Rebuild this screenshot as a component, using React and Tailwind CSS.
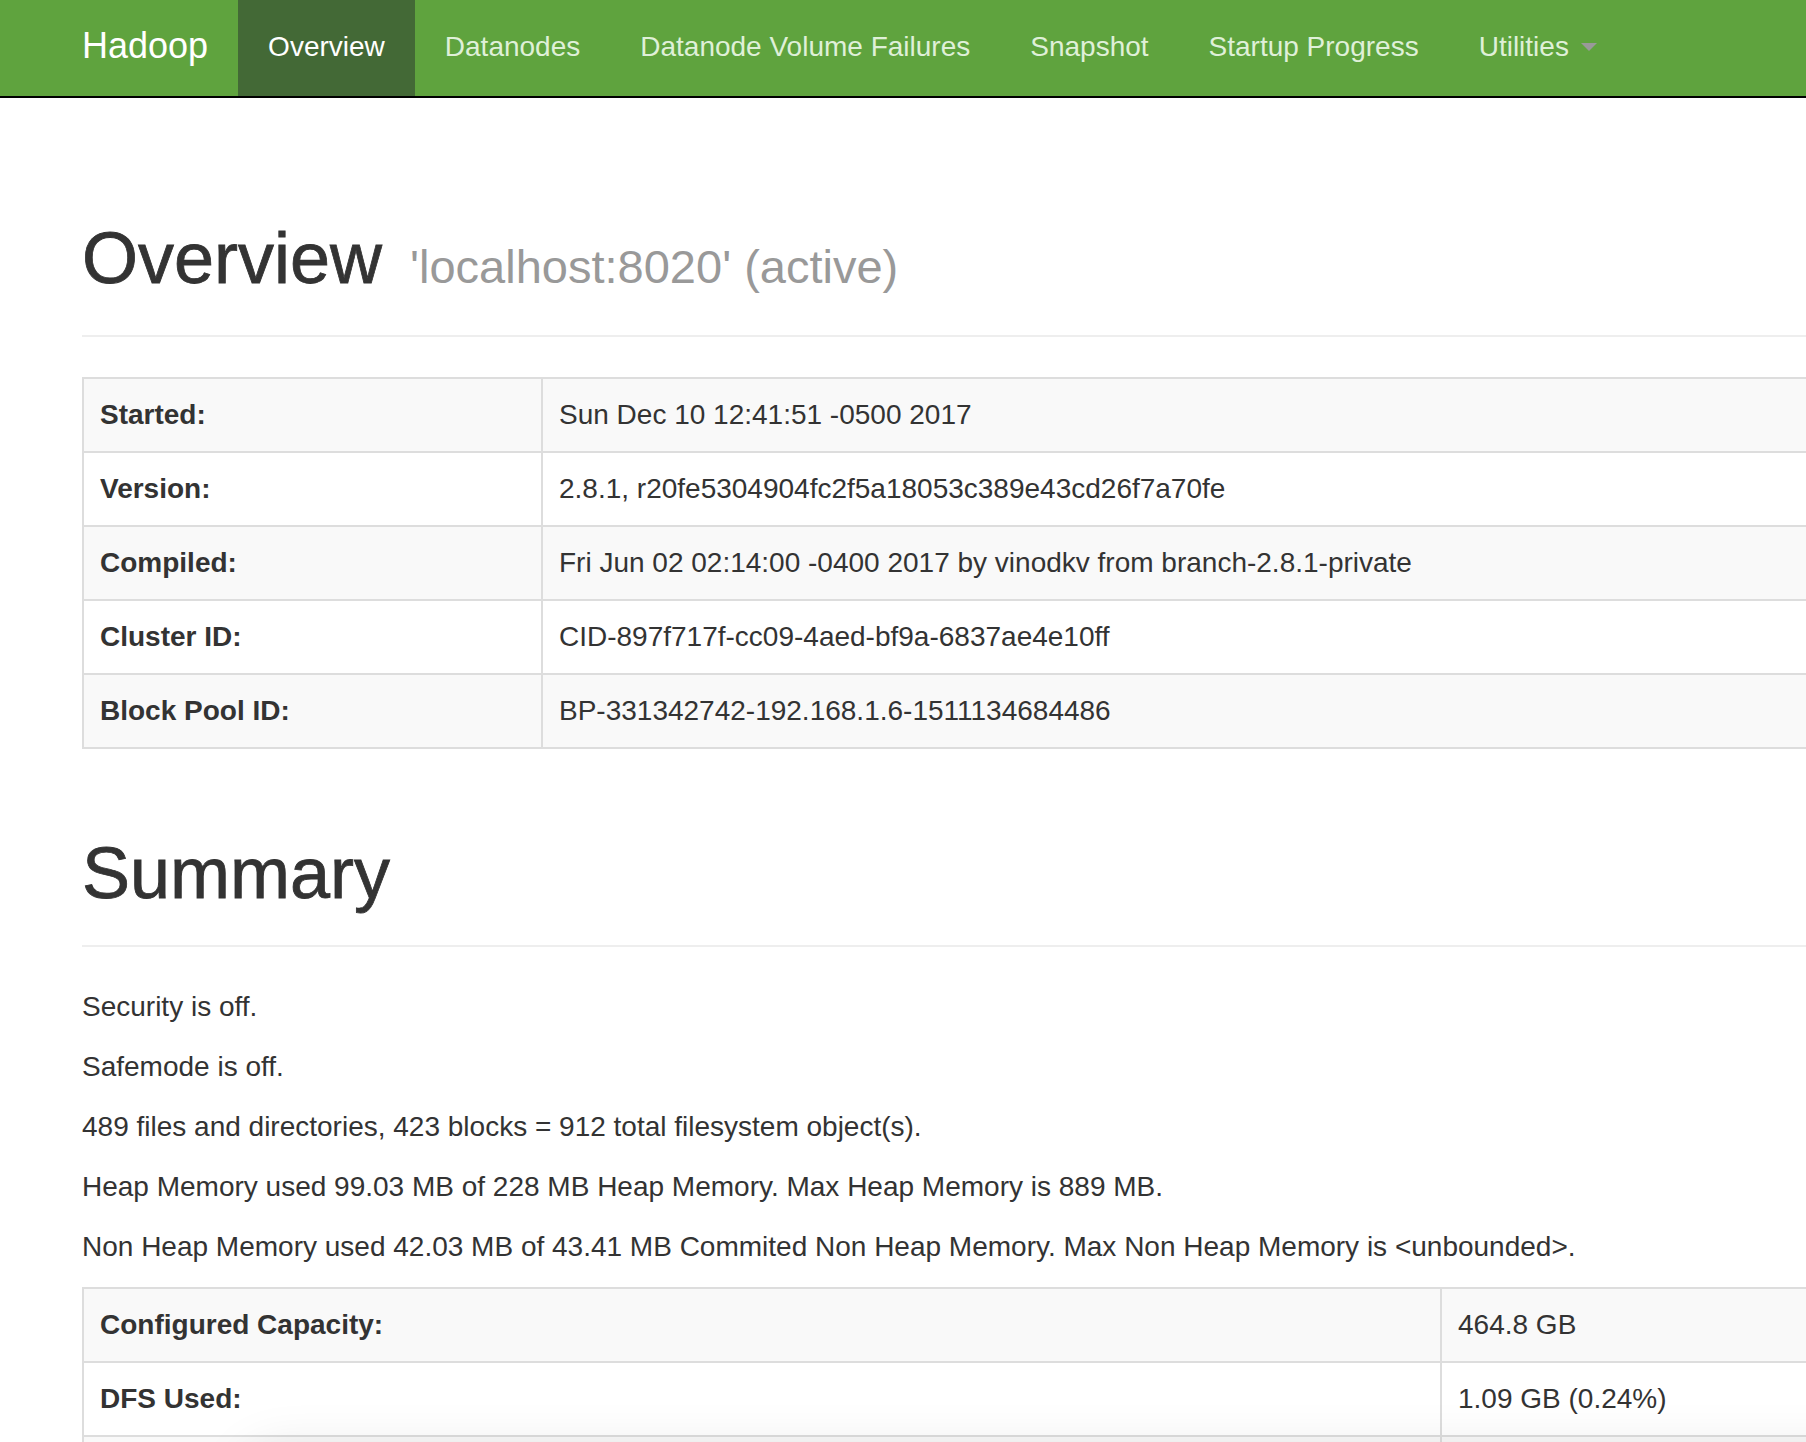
const navItems = [
  { label: 'Overview', active: true },
  { label: 'Datanodes' },
  { label: 'Datanode Volume Failures' },
  { label: 'Snapshot' },
  { label: 'Startup Progress' },
  { label: 'Utilities', caret: true },
];

const info = [
  ['Started:', 'Sun Dec 10 12:41:51 -0500 2017'],
  ['Version:', '2.8.1, r20fe5304904fc2f5a18053c389e43cd26f7a70fe'],
  ['Compiled:', 'Fri Jun 02 02:14:00 -0400 2017 by vinodkv from branch-2.8.1-private'],
  ['Cluster ID:', 'CID-897f717f-cc09-4aed-bf9a-6837ae4e10ff'],
  ['Block Pool ID:', 'BP-331342742-192.168.1.6-1511134684486'],
];

const summaryLines = [
  'Security is off.',
  'Safemode is off.',
  '489 files and directories, 423 blocks = 912 total filesystem object(s).',
  'Heap Memory used 99.03 MB of 228 MB Heap Memory. Max Heap Memory is 889 MB.',
  'Non Heap Memory used 42.03 MB of 43.41 MB Commited Non Heap Memory. Max Non Heap Memory is <unbounded>.',
];

const capacity = [
  ['Configured Capacity:', '464.8 GB'],
  ['DFS Used:', '1.09 GB (0.24%)'],
  ['Non DFS Used:', '84.71 GB'],
];

function InfoTable({ rows, firstCol }) {
  return (
    <table className="table-fixed border-collapse w-[1760px] border-2 border-[#ddd]">
      <colgroup>
        <col className={firstCol} />
        <col />
      </colgroup>
      <tbody>
        {rows.map(([k, v], i) => (
          <tr key={k} className={i % 2 === 0 ? 'bg-[#f9f9f9]' : 'bg-white'}>
            <th className="border-2 border-[#ddd] p-[16px] text-left font-bold leading-[40px]">{k}</th>
            <td className="border-2 border-[#ddd] p-[16px] leading-[40px] whitespace-nowrap">{v}</td>
          </tr>
        ))}
      </tbody>
    </table>
  );
}

function PageHeader({ title, sub, pad }) {
  return (
    <div className={`${pad} border-b-2 border-[#eee]`}>
      <h1 className="text-[72px] leading-[79px] font-medium text-[#333] whitespace-nowrap">
        <span className="[-webkit-text-stroke:0.8px_#333]">{title}</span>
        {sub && <small className="ml-[28px] text-[47px] font-normal text-[#999]">{sub}</small>}
      </h1>
    </div>
  );
}

export default function App() {
  return (
    <div
      className="relative h-[1442px] overflow-hidden bg-white text-[28px] text-[#333]"
      style={{ fontFamily: '"Liberation Sans", Arial, Helvetica, sans-serif' }}
    >
      <nav className="flex h-[98px] bg-[#5fa33e] border-b-2 border-black pl-[52px]">
        <a className="px-[30px] pt-[26px] pb-[30px] text-[36px] leading-[40px] text-white">Hadoop</a>
        {navItems.map((n) => (
          <a
            key={n.label}
            className={`flex items-center px-[30px] pt-[27px] pb-[29px] leading-[40px] whitespace-nowrap ${
              n.active ? 'bg-[#436936] text-white' : 'text-[#dff0d8]'
            }`}
          >
            <span>{n.label}</span>
            {n.caret && (
              <span className="ml-[12px] inline-block w-0 h-0 border-x-[8px] border-x-transparent border-t-[8px] border-t-[#999]" />
            )}
          </a>
        ))}
      </nav>

      <div className="pl-[82px] w-[2000px]">
        <PageHeader title="Overview" sub="'localhost:8020' (active)" pad="pt-[121px] pb-[29px]" />

        <div className="mt-[40px]">
          <InfoTable rows={info} firstCol="w-[459px]" />
        </div>

        <PageHeader title="Summary" pad="pt-[85px] pb-[32px]" />

        <div className="mt-[40px]">
          {summaryLines.map((l) => (
            <p key={l} className="leading-[40px] mb-[20px] whitespace-nowrap">{l}</p>
          ))}
        </div>

        <InfoTable rows={capacity} firstCol="w-[1358px]" />
      </div>

      {/* soft shadow of something just below the visible area */}
      <div className="pointer-events-none absolute left-[240px] top-[1448px] w-[1700px] h-[80px] rounded-[40px] shadow-[0_0_50px_rgba(0,0,0,0.10)]" />
    </div>
  );
}
